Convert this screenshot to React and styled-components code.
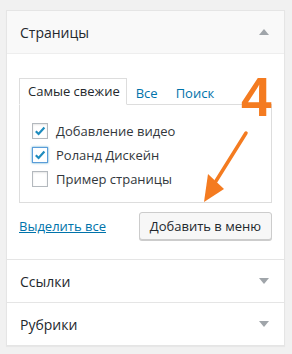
import React from 'react';
import styled, { createGlobalStyle } from 'styled-components';

const GlobalStyle = createGlobalStyle`
  body {
    margin: 0;
    background: #f1f1f1;
    font-family: "Open Sans", "Noto Sans", sans-serif;
    color: #23282d;
  }
`;

const Page = styled.div`
  padding: 10px 7px 9px 6px;
`;

const Panel = styled.div`
  position: relative;
  background: #fff;
  border: 1px solid #e5e5e5;
  box-shadow: 0 1px 1px rgba(0,0,0,.04);
`;

const Section = styled.div`
  border-top: ${ p => p.first ? 'none' : '1px solid #e5e5e5' };
`;

const SectionHead = styled.div`
  height: 42px;
  display: flex;
  align-items: center;
  justify-content: space-between;
  padding: 0 15px 0 13px;
  font-size: 14px;
  color: #23282d;
  background: ${ p => p.open ? '#f9f9f9' : '#fff' };
  border-bottom: ${ p => p.open ? '1px solid #eee' : 'none' };
`;

const Toggle = styled.span`
  width: 0;
  height: 0;
  border-left: 5px solid transparent;
  border-right: 5px solid transparent;
  ${ p => p.up
    ? 'border-bottom: 6px solid #a0a5aa;'
    : 'border-top: 6px solid #a0a5aa;' }
`;

const SectionBody = styled.div`
  padding: 24px 12px 19px 12px;
`;

const Tabs = styled.div`
  display: flex;
  align-items: flex-end;
  margin-bottom: -1px;
  position: relative;
`;

const Tab = styled.div`
  font-size: 13px;
  height: ${ p => p.active ? '25px' : '24px' };
  line-height: 25px;
  padding: ${ p => p.active ? '0 6px 0 8px' : '0 8px 0 8px' };
  color: ${ p => p.active ? '#23282d' : '#0073aa' };
  background: ${ p => p.active ? '#fff' : 'transparent' };
  border: 1px solid ${ p => p.active ? '#ddd' : 'transparent' };
  border-bottom: ${ p => p.active ? '1px solid #fff' : 'none' };
`;

const TabPanel = styled.div`
  border: 1px solid #ddd;
  padding: 18px 12px 15px 12px;
  display: flex;
  flex-direction: column;
  gap: 8px;
`;

const CheckRow = styled.label`
  display: flex;
  align-items: center;
  gap: 8px;
  font-size: 13px;
  height: 16px;
  color: #32373c;
`;

const Box = styled.span`
  width: 14px;
  height: 14px;
  border: 1px solid ${ p => p.focus ? '#5b9dd9' : '#b4b9be' };
  box-shadow: ${ p => p.focus ? '0 0 2px rgba(30,140,190,.8)' : 'inset 0 1px 2px rgba(0,0,0,.1)' };
  background: #fff;
  display: flex;
  align-items: center;
  justify-content: center;
  flex-shrink: 0;
`;

const Actions = styled.div`
  display: flex;
  align-items: center;
  justify-content: space-between;
  margin-top: 9px;
`;

const SelectAll = styled.a`
  font-size: 13px;
  color: #0073aa;
  text-decoration: underline;
`;

const Button = styled.button`
  font-family: inherit;
  font-size: 13px;
  color: #23282d;
  height: 28px;
  padding: 0 10px;
  background: #f7f7f7;
  border: 1px solid #ccc;
  border-radius: 3px;
  box-shadow: 0 1px 0 #ccc;
`;

const Annotation = styled.div`
  position: absolute;
  left: 234px;
  top: 59px;
  font-family: "Liberation Sans", Arial, sans-serif;
  font-weight: bold;
  font-size: 55px;
  line-height: 55px;
  color: #f47b20;
`;

const Arrow = styled.svg`
  position: absolute;
  left: 184px;
  top: 110px;
`;

const Check = () => (
  <svg width="12" height="12" viewBox="0 0 12 12">
    <path d="M1.8 6.2 L4.6 9 L10.4 2.6" fill="none" stroke="#1e8cbe" strokeWidth="2.2" />
  </svg>
);

const items = [
  { name: 'Добавление видео', checked: true },
  { name: 'Роланд Дискейн', checked: true, focus: true },
  { name: 'Пример страницы', checked: false },
];

export default function App() {
  return <>
    <GlobalStyle />
    <Page>
      <Panel>
        <Section first>
          <SectionHead open>Страницы <Toggle up /></SectionHead>
          <SectionBody>
            <Tabs>
              <Tab active>Самые свежие</Tab>
              <Tab>Все</Tab>
              <Tab>Поиск</Tab>
            </Tabs>
            <TabPanel>
              {
                items.map(({ name, checked, focus }) =>
                  <CheckRow key={ name }>
                    <Box focus={ focus }>{ checked && <Check /> }</Box>
                    { name }
                  </CheckRow>)
              }
            </TabPanel>
            <Actions>
              <SelectAll href="#">Выделить все</SelectAll>
              <Button>Добавить в меню</Button>
            </Actions>
          </SectionBody>
        </Section>
        <Section>
          <SectionHead>Ссылки <Toggle /></SectionHead>
        </Section>
        <Section>
          <SectionHead>Рубрики <Toggle /></SectionHead>
        </Section>

        <Annotation>4</Annotation>
        <Arrow width="70" height="90" viewBox="0 0 70 90">
          <path d="M55 12 L25 60" stroke="#f47b20" strokeWidth="3.5" strokeLinecap="round" />
          <path d="M13 81 L17 53 L33 68 Z" fill="#f47b20" />
        </Arrow>
      </Panel>
    </Page>
  </>;
}
